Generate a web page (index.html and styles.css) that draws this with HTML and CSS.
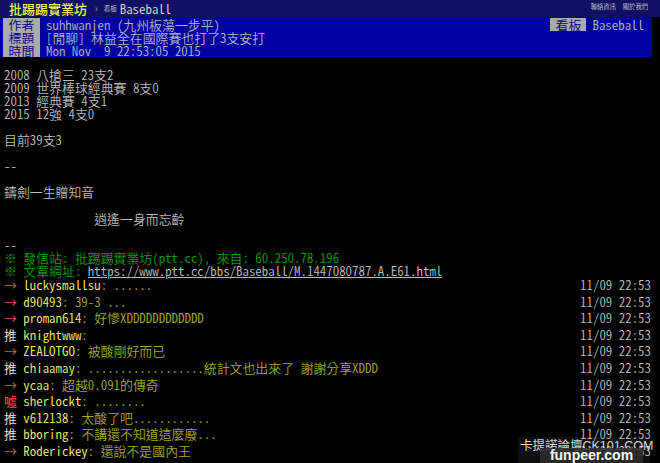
FILE: index.html
```html
<!DOCTYPE html>
<html lang="zh-Hant">
<head>
<meta charset="utf-8">
<title>[閒聊] 林益全在國際賽也打了3支安打 - 看板 Baseball - 批踢踢實業坊</title>
<link rel="stylesheet" href="styles.css">
</head>
<body>
<div class="topbar">
  <span class="logo">批踢踢實業坊</span>
  <span class="crumb">›</span>
  <span class="board-label">看板</span>
  <span class="board-name">Baseball</span>
  <div class="links"><span>聯絡資訊</span><span>關於我們</span></div>
</div>
<div class="main">
  <div class="meta">
    <div class="metaline">
      <span class="tag">作者</span><span class="value">suhhwanjen (九州板蕩一步平)</span>
      <span class="meta-right"><span class="tag">看板</span><span class="value">Baseball</span></span>
    </div>
    <div class="metaline"><span class="tag">標題</span><span class="value">[閒聊] 林益全在國際賽也打了3支安打</span></div>
    <div class="metaline"><span class="tag">時間</span><span class="value">Mon Nov  9 22:53:05 2015</span></div>
  </div>
  <div class="content">2008 八搶三 23支2
2009 世界棒球經典賽 8支0
2013 經典賽 4支1
2015 12強 4支0

目前39支3

--

鑄劍一生贈知音

              逍遙一身而忘齡

--
<span class="f2">※ 發信站: 批踢踢實業坊(ptt.cc), 來自: 60.250.78.196</span>
<span class="f2">※ 文章網址: </span><span class="link">https://www.ptt.cc/bbs/Baseball/M.1447080787.A.E61.html</span></div>
  <div class="pushes">
    <div class="push"><span class="ptag arrow">→ </span><span class="uid">luckysmallsu</span><span class="pc">: ......</span><span class="pt">11/09 22:53</span></div>
    <div class="push"><span class="ptag arrow">→ </span><span class="uid">d90493</span><span class="pc">: 39-3 ...</span><span class="pt">11/09 22:53</span></div>
    <div class="push"><span class="ptag arrow">→ </span><span class="uid">proman614</span><span class="pc">: 好慘XDDDDDDDDDDDD</span><span class="pt">11/09 22:53</span></div>
    <div class="push"><span class="ptag good">推 </span><span class="uid">knightwww</span><span class="pc">:</span><span class="pt">11/09 22:53</span></div>
    <div class="push"><span class="ptag arrow">→ </span><span class="uid">ZEALOTGO</span><span class="pc">: 被酸剛好而已</span><span class="pt">11/09 22:53</span></div>
    <div class="push"><span class="ptag good">推 </span><span class="uid">chiaamay</span><span class="pc">: ..................統計文也出來了 謝謝分享XDDD</span><span class="pt">11/09 22:53</span></div>
    <div class="push"><span class="ptag arrow">→ </span><span class="uid">ycaa</span><span class="pc">: 超越0.091的傳奇</span><span class="pt">11/09 22:53</span></div>
    <div class="push"><span class="ptag bad">噓 </span><span class="uid">sherlockt</span><span class="pc">: ........</span><span class="pt">11/09 22:53</span></div>
    <div class="push"><span class="ptag good">推 </span><span class="uid">v612138</span><span class="pc">: 太酸了吧............</span><span class="pt">11/09 22:53</span></div>
    <div class="push"><span class="ptag good">推 </span><span class="uid">bboring</span><span class="pc">: 不講還不知道這麼廢...</span><span class="pt">11/09 22:53</span></div>
    <div class="push"><span class="ptag arrow">→ </span><span class="uid">Roderickey</span><span class="pc">: 還說不是國內王</span><span class="pt">11/09 22:53</span></div>
  </div>
</div>
<div class="wm-ck">卡提諾論壇CK101.COM</div>
<div class="wm-fp">funpeer.com</div>
</body>
</html>
```
FILE: styles.css
```css
* {
  box-sizing: border-box;
  margin: 0;
  padding: 0;
}

body {
  position: relative;
  width: 660px;
  height: 463px;
  overflow: hidden;
  background: #000;
  color: #bbb;
  font-family: "Noto Sans CJK TC", sans-serif;
  font-weight: 350;
  font-feature-settings: "hwid" 1;
}

.topbar {
  display: flex;
  align-items: center;
  height: 17px;
  padding-left: 9px;
  background: #100f63;
  color: #ccc;
}

.logo {
  color: #f2f25a;
  font-weight: 500;
  font-size: 13px;
  line-height: 17px;
  font-feature-settings: normal;
}

.crumb {
  margin-left: 8px;
  font-size: 9px;
  line-height: 17px;
}

.board-label {
  margin-left: 6px;
  font-size: 6.5px;
  line-height: 17px;
}

.board-name {
  margin-left: 3px;
  font-size: 12.9px;
  line-height: 17px;
  color: #ddd;
}

.links {
  display: flex;
  gap: 7px;
  margin-left: auto;
  margin-right: 12px;
  align-self: flex-start;
  padding-top: 3px;
  font-size: 6.3px;
  line-height: 7px;
  color: #ccc;
}

.main {
  width: 652px;
}

.meta {
  height: 40px;
  padding: 1px 0 0 3px;
  background: #0000a0;
  font-size: 12.9px;
}

.metaline {
  display: flex;
  height: 13px;
  line-height: 13px;
}

.tag {
  width: 37px;
  text-align: center;
  background: #aaa;
  color: #000080;
}

.value {
  padding-left: 6px;
  color: #b4b4c8;
  white-space: pre;
}

.meta-right {
  display: flex;
  margin-left: auto;
  padding-right: 8px;
}

.meta-right .tag {
  width: 36px;
}

.content {
  padding: 10.5px 0 0 4px;
  font-size: 12.9px;
  line-height: 13.1px;
  white-space: pre;
}

.f2 {
  color: #00a000;
}

.link {
  color: #bbb;
  text-decoration: underline;
}

.pushes {
  padding: 0 1px 0 4px;
  font-size: 12.9px;
  line-height: 16.6px;
}

.push {
  white-space: pre;
}

.ptag.good {
  color: #e6e6e6;
}

.ptag.arrow {
  color: #e05555;
}

.ptag.bad {
  color: #f03a3a;
  font-weight: 500;
}

.uid {
  color: #eeee70;
}

.pc {
  color: #a8a820;
}

.pt {
  float: right;
  color: #bbb;
}

.wm-ck {
  position: absolute;
  left: 518px;
  top: 437px;
  width: 132px;
  height: 26px;
  padding: 2px 0 0 2px;
  background: rgba(255, 255, 255, 0.06);
  color: rgba(255, 255, 255, 0.85);
  font-family: "Liberation Sans", "Noto Sans CJK TC", sans-serif;
  font-weight: normal;
  font-feature-settings: normal;
  font-size: 12.5px;
  line-height: 14px;
  white-space: nowrap;
}

.wm-fp {
  position: absolute;
  left: 540px;
  top: 448px;
  width: 103px;
  height: 15px;
  background: rgba(45, 45, 45, 0.88);
  color: #fff;
  font-family: "Liberation Sans", sans-serif;
  font-feature-settings: normal;
  font-weight: bold;
  font-size: 14px;
  line-height: 15px;
  text-align: center;
}
```
